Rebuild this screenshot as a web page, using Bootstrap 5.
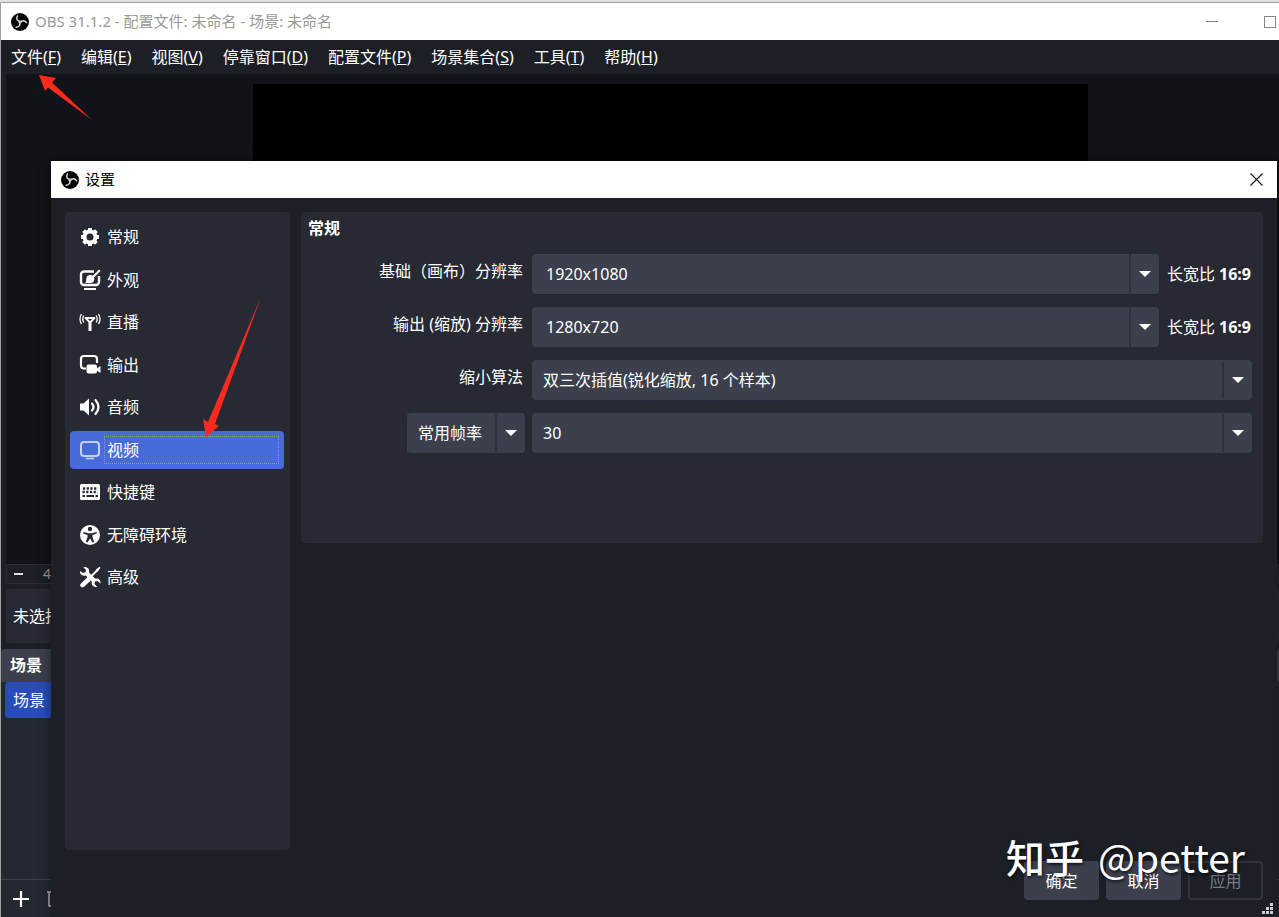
<!DOCTYPE html>
<html lang="zh-CN">
<head>
<meta charset="utf-8">
<meta name="viewport" content="width=device-width, initial-scale=1">
<title>OBS 31.1.2</title>
<link rel="stylesheet" href="https://cdn.jsdelivr.net/npm/bootstrap@5.3.0/dist/css/bootstrap.min.css">
<style>
  :root {
    --obs-bg: #1d1f26;
    --obs-panel: #272a33;
    --obs-control: #3c404d;
    --obs-select: #476bd7;
  }
  body {
    font-family: "Noto Sans", "Noto Sans CJK SC", sans-serif;
    font-size: 16px;
    line-height: 24px;
    color: #fff;
    background: var(--obs-bg);
  }
  button { color: inherit; }
  .obs-window { border-top: 1px solid #a0a0a0; border-left: 1px solid #a0a0a0; overflow: hidden; }
  .desk-strip { height: 2px; background: #e0e0e0; }
  .title-bar { height: 37px; background: #fff; font-size: 15px; gap: 6px; }
  .title-bar .obs-logo { width: 18px; height: 18px; }
  .title-bar span { line-height: 22px; padding-bottom: 2px; }
  .main-title { font-family: "Noto Sans", "Noto Sans CJK SC", sans-serif; color: #999; padding: 0 3px 0 10px; }
  .win-btn { border: 0; padding: 0; background: none; line-height: 0; }
  .win-min { margin-right: 40px; }
  .menu-bar { height: 34px; padding-left: 10px; gap: 20px; }
  .menu-bar button { border: 0; padding: 0; background: none; }
  .preview { background: #121318; height: 490px; margin-left: 5px; padding: 10px 191px 10px 247px; }
  .preview-canvas { background: #000; }
  .preview-status { height: 20px; margin-left: 5px; padding: 0 7px; gap: 20px; border: 1px solid #2b2e37; color: #999; font-size: 14px; line-height: 18px; }
  .source-bar { height: 54px; margin: 5px 0 6px 5px; padding-left: 7px; background: var(--obs-panel); border-radius: 4px; }
  .scene-dock { background: #242831; }
  .dock-title { height: 33px; padding: 0 0 2px 9px; background: var(--obs-control); border-radius: 4px 4px 0 0; }
  .scene-item { height: 36px; width: 25%; margin-left: 4px; padding: 0 8px; border: 0; border-radius: 4px; background: #284cb8; text-align: left; }
  .dock-tools { height: 38px; padding-left: 12px; gap: 17px; border-top: 1px solid #3c404d; }

  .settings-dialog { position: absolute; top: 161px; left: 51px; right: 2px; bottom: 0; background: var(--obs-bg); box-shadow: 0 0 10px #0008; }
  .settings-title { color: #000; padding: 0 14px 0 10px; }
  .settings-body { padding: 14px 14px 0; gap: 11px; }
  .side-panel { width: 225px; padding: 6px 6px 0 5px; background: var(--obs-panel); border-radius: 4px; margin-bottom: 11px; }
  .side-list { height: 378px; }
  .side-item { height: 38px; padding: 0 5px 0 9px; gap: 3px; border: 0; border-radius: 4px; background: none; text-align: left; }
  .side-item svg { width: 22px; height: 22px; flex: none; }
  .side-item span { height: 28px; padding-left: 2px; line-height: 26px; flex: 1; border: 1px solid transparent; }
  .side-item.current { background: var(--obs-select); }
  .side-item.current span { border: 1px dotted #a09a80; }

  .general-panel { height: 331px; padding: 4px 11px 0 7px; background: var(--obs-panel); border-radius: 4px; }
  .general-panel h2 { font-size: 16px; line-height: 24px; font-weight: 700; margin-bottom: 14px; }
  .form-rows { display: grid; grid-template-columns: 217px 1fr; column-gap: 7px; row-gap: 13px; }
  .form-rows > label { text-align: right; padding: 5px 2px 0 0; }
  .obs-control { height: 40px; border: 0; border-radius: 4px; background-color: var(--obs-control); color: #fff; }
  .obs-edit { padding: 0 14px; min-width: 0; border-radius: 4px 0 0 4px; }
  .obs-drop { width: 30px; padding: 0; border-left: 2px solid #2f323c; border-radius: 0 4px 4px 0; line-height: 0; }
  .obs-select {
    appearance: none; padding: 0 40px 0 11px;
    background-image:
      url("data:image/svg+xml,%3Csvg xmlns='http://www.w3.org/2000/svg' viewBox='0 0 12 6'%3E%3Cpath d='M0 0h12L6 6z' fill='white'/%3E%3C/svg%3E"),
      linear-gradient(#2f323c, #2f323c);
    background-repeat: no-repeat;
    background-size: 12px 6px, 2px 38px;
    background-position: right 8px center, right 28px center;
  }
  .rate-type { width: 118px; }
  .aspect-note { white-space: nowrap; margin-left: 8px; padding-right: 1px; }
  .dialog-foot { padding: 0 14px 17px; gap: 7px; }
  .foot-btn { width: 75px; height: 39px; border: 0; border-radius: 4px; background: var(--obs-control); }
  .foot-btn:disabled { background: var(--obs-bg); border: 2px solid #30333d; color: #777a80; }
  .size-grip { position: absolute; right: 3px; bottom: 2px; width: 12px; height: 12px; }
  .site-mark {
    position: absolute; right: 34px; bottom: 31px; gap: 14px; font-family: "Noto Sans CJK SC", sans-serif;
    font-size: 39px; line-height: 60px; white-space: nowrap; text-shadow: 1px 2px 3px #000a;
  }
  .site-mark b { font-weight: 500; }
  .arrow-menu { position: absolute; left: 39px; top: 75px; width: 54px; height: 46px; }
  .arrow-video { position: absolute; left: 202px; top: 297px; width: 60px; height: 142px; }
</style>
</head>
<body class="position-relative vh-100 overflow-hidden d-flex flex-column">
<svg class="d-none" aria-hidden="true">
  <symbol id="obs-logo" viewBox="0 0 18 18">
    <circle cx="9" cy="9" r="9" fill="#050505"/>
    <g fill="none" stroke="#d8d8d8" stroke-width="1.500" stroke-linecap="round">
      <path d="M9.300 8.300C6.500 8.500 4.800 6 6.300 3"/>
      <path d="M9.300 8.300C6.500 8.500 4.800 6 6.300 3" transform="rotate(120 9 9)"/>
      <path d="M9.300 8.300C6.500 8.500 4.800 6 6.300 3" transform="rotate(240 9 9)"/>
    </g>
  </symbol>
</svg>

<div class="desk-strip"></div>
<main class="obs-window flex-grow-1 d-flex flex-column">
  <header class="title-bar main-title d-flex align-items-center flex-shrink-0">
    <svg class="obs-logo"><use href="#obs-logo"/></svg>
    <span class="me-auto text-nowrap">OBS 31.1.2 - 配置文件: 未命名 - 场景: 未命名</span>
    <button class="win-btn win-min" aria-label="最小化"><svg width="12" height="12"><path d="M0 5.500h12" stroke="#888"/></svg></button>
    <button class="win-btn me-n1" aria-label="最大化"><svg width="12" height="12"><rect x=".5" y=".5" width="11" height="11" fill="none" stroke="#888"/></svg></button>
  </header>
  <nav class="menu-bar d-flex align-items-center flex-shrink-0">
    <button>文件(<u>F</u>)</button>
    <button>编辑(<u>E</u>)</button>
    <button>视图(<u>V</u>)</button>
    <button>停靠窗口(<u>D</u>)</button>
    <button>配置文件(<u>P</u>)</button>
    <button>场景集合(<u>S</u>)</button>
    <button>工具(<u>T</u>)</button>
    <button>帮助(<u>H</u>)</button>
  </nav>
  <section class="preview flex-shrink-0"><div class="preview-canvas h-100"></div></section>
  <div class="preview-status d-flex align-items-center flex-shrink-0">
    <svg width="9" height="2"><path d="M0 1h9" stroke="#ddd" stroke-width="2"/></svg><span>4</span>
  </div>
  <div class="source-bar d-flex align-items-center flex-shrink-0">未选择</div>
  <section class="scene-dock flex-grow-1 d-flex flex-column">
    <div class="dock-title d-flex align-items-center fw-bold">场景</div>
    <button class="scene-item">场景</button>
    <div class="dock-tools mt-auto d-flex align-items-center">
      <svg width="16" height="16"><path d="M8 0v16M0 8h16" stroke="#fff" stroke-width="2.200"/></svg>
      <svg width="14" height="18"><path d="M1 2h12M3 3v13h8V3M5 1h4" fill="none" stroke="#bbb" stroke-width="1.500"/></svg>
    </div>
  </section>
</main>

<section class="settings-dialog d-flex flex-column" role="dialog" aria-labelledby="settings-name">
  <header class="title-bar settings-title d-flex align-items-center flex-shrink-0">
    <svg class="obs-logo"><use href="#obs-logo"/></svg>
    <span id="settings-name" class="me-auto">设置</span>
    <button class="win-btn" aria-label="关闭"><svg width="13" height="13"><path d="M.5.5l12 12M12.500.5l-12 12" stroke="#111" stroke-width="1.100"/></svg></button>
  </header>

  <div class="settings-body d-flex flex-grow-1 align-items-stretch">
    <nav class="side-panel flex-shrink-0">
      <div class="side-list d-flex flex-column justify-content-between">
        <button class="side-item d-flex align-items-center">
          <svg viewBox="0 0 22 22"><circle cx="11" cy="11" r="5.500" fill="none" stroke="#fff" stroke-width="4"/><path d="M11 2v3M11 17v3M2 11h3M17 11h3M4.600 4.600l2 2M15.400 15.400l2 2M4.600 17.400l2-2M15.400 6.600l2-2" stroke="#fff" stroke-width="4"/></svg>
          <span>常规</span></button>
        <button class="side-item d-flex align-items-center">
          <svg viewBox="0 0 22 22"><path d="M15 2.500H5a3 3 0 0 0-3 3V13a3 3 0 0 0 3 3h12a3 3 0 0 0 3-3V7" fill="none" stroke="#fff" stroke-width="2.400"/><path d="M5 19h12v2H5zM20 .5l1.500 1.500-6.500 6.500L13.500 7z" fill="#fff"/><path d="M6.500 13.500Q7.500 13 7.300 10a4 4 0 1 1 4 4H6.500z" fill="#fff"/></svg>
          <span>外观</span></button>
        <button class="side-item d-flex align-items-center">
          <svg viewBox="0 0 22 22" fill="none" stroke="#fff"><path d="M6.500 7h9L11 11.500z" stroke-width="1.800" stroke-linejoin="round"/><path d="M11 10v10" stroke-width="3"/><path d="M4.800 4.500q-2 3.500 0 7M17.200 4.500q2 3.500 0 7M2.500 3q-3 5 0 10M19.500 3q3 5 0 10" stroke-width="1.300"/></svg>
          <span>直播</span></button>
        <button class="side-item d-flex align-items-center">
          <svg viewBox="0 0 22 22"><path d="M7 14.500H5a3 3 0 0 1-3-3V5a3 3 0 0 1 3-3h10a3 3 0 0 1 3 3v4" fill="none" stroke="#fff" stroke-width="2.200"/><rect x="7.500" y="10.500" width="10.500" height="9" rx="2" fill="#fff"/><path d="M17 15l4.500-3v7L17 16z" fill="#fff"/></svg>
          <span>输出</span></button>
        <button class="side-item d-flex align-items-center">
          <svg viewBox="0 0 22 22"><path d="M1 7.500h3.500L10 2.500v17l-5.500-5H1z" fill="#fff"/><path d="M13 7.500q3 3.500 0 7M16.500 4q6 7 0 14" fill="none" stroke="#fff" stroke-width="2.200" stroke-linecap="round"/></svg>
          <span>音频</span></button>
        <button class="side-item current d-flex align-items-center" aria-current="page">
          <svg viewBox="0 0 22 22"><rect x="2" y="3" width="18" height="14" rx="3" fill="none" stroke="#c5d0f5" stroke-width="2"/><path d="M7 19.500h8" stroke="#c5d0f5" stroke-width="1.600"/></svg>
          <span>视频</span></button>
        <button class="side-item d-flex align-items-center">
          <svg viewBox="0 0 22 22"><rect x="1" y="3" width="20" height="16" rx="1.500" fill="#fff"/><path d="M4 7.500h15M3.500 11h15" stroke="#272a33" stroke-width="2.400" stroke-dasharray="2.200 1.500"/><path d="M3.500 15h2.500M7.500 15h7.500M16.500 15H19" stroke="#272a33" stroke-width="2"/></svg>
          <span>快捷键</span></button>
        <button class="side-item d-flex align-items-center">
          <svg viewBox="0 0 22 22"><circle cx="11" cy="11" r="10" fill="#fff"/><circle cx="11" cy="5" r="2.200" fill="#272a33"/><path d="M4.500 8l5 1.200h3l5-1.200.4 1.400-4.400 1.500v2.300l1.700 4.800-1.700.6L11 14.500l-2.500 4.100-1.700-.6 1.700-4.800v-2.300L4.100 9.400z" fill="#272a33"/></svg>
          <span>无障碍环境</span></button>
        <button class="side-item d-flex align-items-center">
          <svg viewBox="0 0 22 22"><path d="M3.500 19.200l7-6.700" stroke="#fff" stroke-width="4.500" stroke-linecap="round"/><path d="M10.500 12l8-8" stroke="#fff" stroke-width="2"/><path d="M17 3.500L20.500.8l1 1L18.800 5.500 17.500 5.500zM1 5l3 2 2.500-.7L7 4 4.500 1.200C8 .5 11 3 10 6.500l6.300 6.200c3-.8 5.700 1.500 5.200 4.800L18.500 15l-2.500.5-.5 2.500 2.800 3c-4 .6-6.300-2.300-5.500-5.500L6.800 9.500C3.500 10.500.5 8 1 5z" fill="#fff"/></svg>
          <span>高级</span></button>
      </div>
    </nav>

    <section class="general-panel flex-grow-1">
      <h2>常规</h2>
      <div class="form-rows">
        <label for="base-size">基础（画布）分辨率</label>
        <div class="d-flex align-items-center">
          <input id="base-size" class="obs-control obs-edit flex-grow-1" value="1920x1080">
          <button class="obs-control obs-drop" aria-label="选择基础分辨率"><svg width="12" height="6"><path d="M0 0h12L6 6z" fill="#fff"/></svg></button>
          <span class="aspect-note">长宽比 <b>16:9</b></span>
        </div>
        <label for="out-size">输出 (缩放) 分辨率</label>
        <div class="d-flex align-items-center">
          <input id="out-size" class="obs-control obs-edit flex-grow-1" value="1280x720">
          <button class="obs-control obs-drop" aria-label="选择输出分辨率"><svg width="12" height="6"><path d="M0 0h12L6 6z" fill="#fff"/></svg></button>
          <span class="aspect-note">长宽比 <b>16:9</b></span>
        </div>
        <label for="scale-filter">缩小算法</label>
        <select id="scale-filter" class="obs-control obs-select w-100"><option>双三次插值(锐化缩放, 16 个样本)</option></select>
        <div class="text-end"><select class="obs-control obs-select rate-type" aria-label="帧率类型"><option>常用帧率</option></select></div>
        <select class="obs-control obs-select w-100" aria-label="帧率"><option>30</option></select>
      </div>
    </section>
  </div>

  <footer class="dialog-foot d-flex justify-content-end">
    <button class="foot-btn">确定</button>
    <button class="foot-btn">取消</button>
    <button class="foot-btn" disabled>应用</button>
  </footer>
  <svg class="size-grip" viewBox="0 0 12 12"><path d="M8 0h3v3H8zM4 4h3v3H4zM8 4h3v3H8zM0 8h3v3H0zM4 8h3v3H4zM8 8h3v3H8z" fill="#ccc"/></svg>
</section>

<svg class="arrow-menu" viewBox="0 0 54 46"><path d="M0 0l17 3-4 4.500L53 45 9 12.500 6 16z" fill="#fc2a1c"/></svg>
<svg class="arrow-video" viewBox="0 0 60 142"><path d="M4 140L1 122l5 3L59 0 13 127l4 2z" fill="#fc2a1c"/></svg>
<div class="site-mark d-flex"><b>知乎</b> <span>@petter</span></div>

<script src="https://cdn.jsdelivr.net/npm/bootstrap@5.3.0/dist/js/bootstrap.bundle.min.js"></script>
</body>
</html>
